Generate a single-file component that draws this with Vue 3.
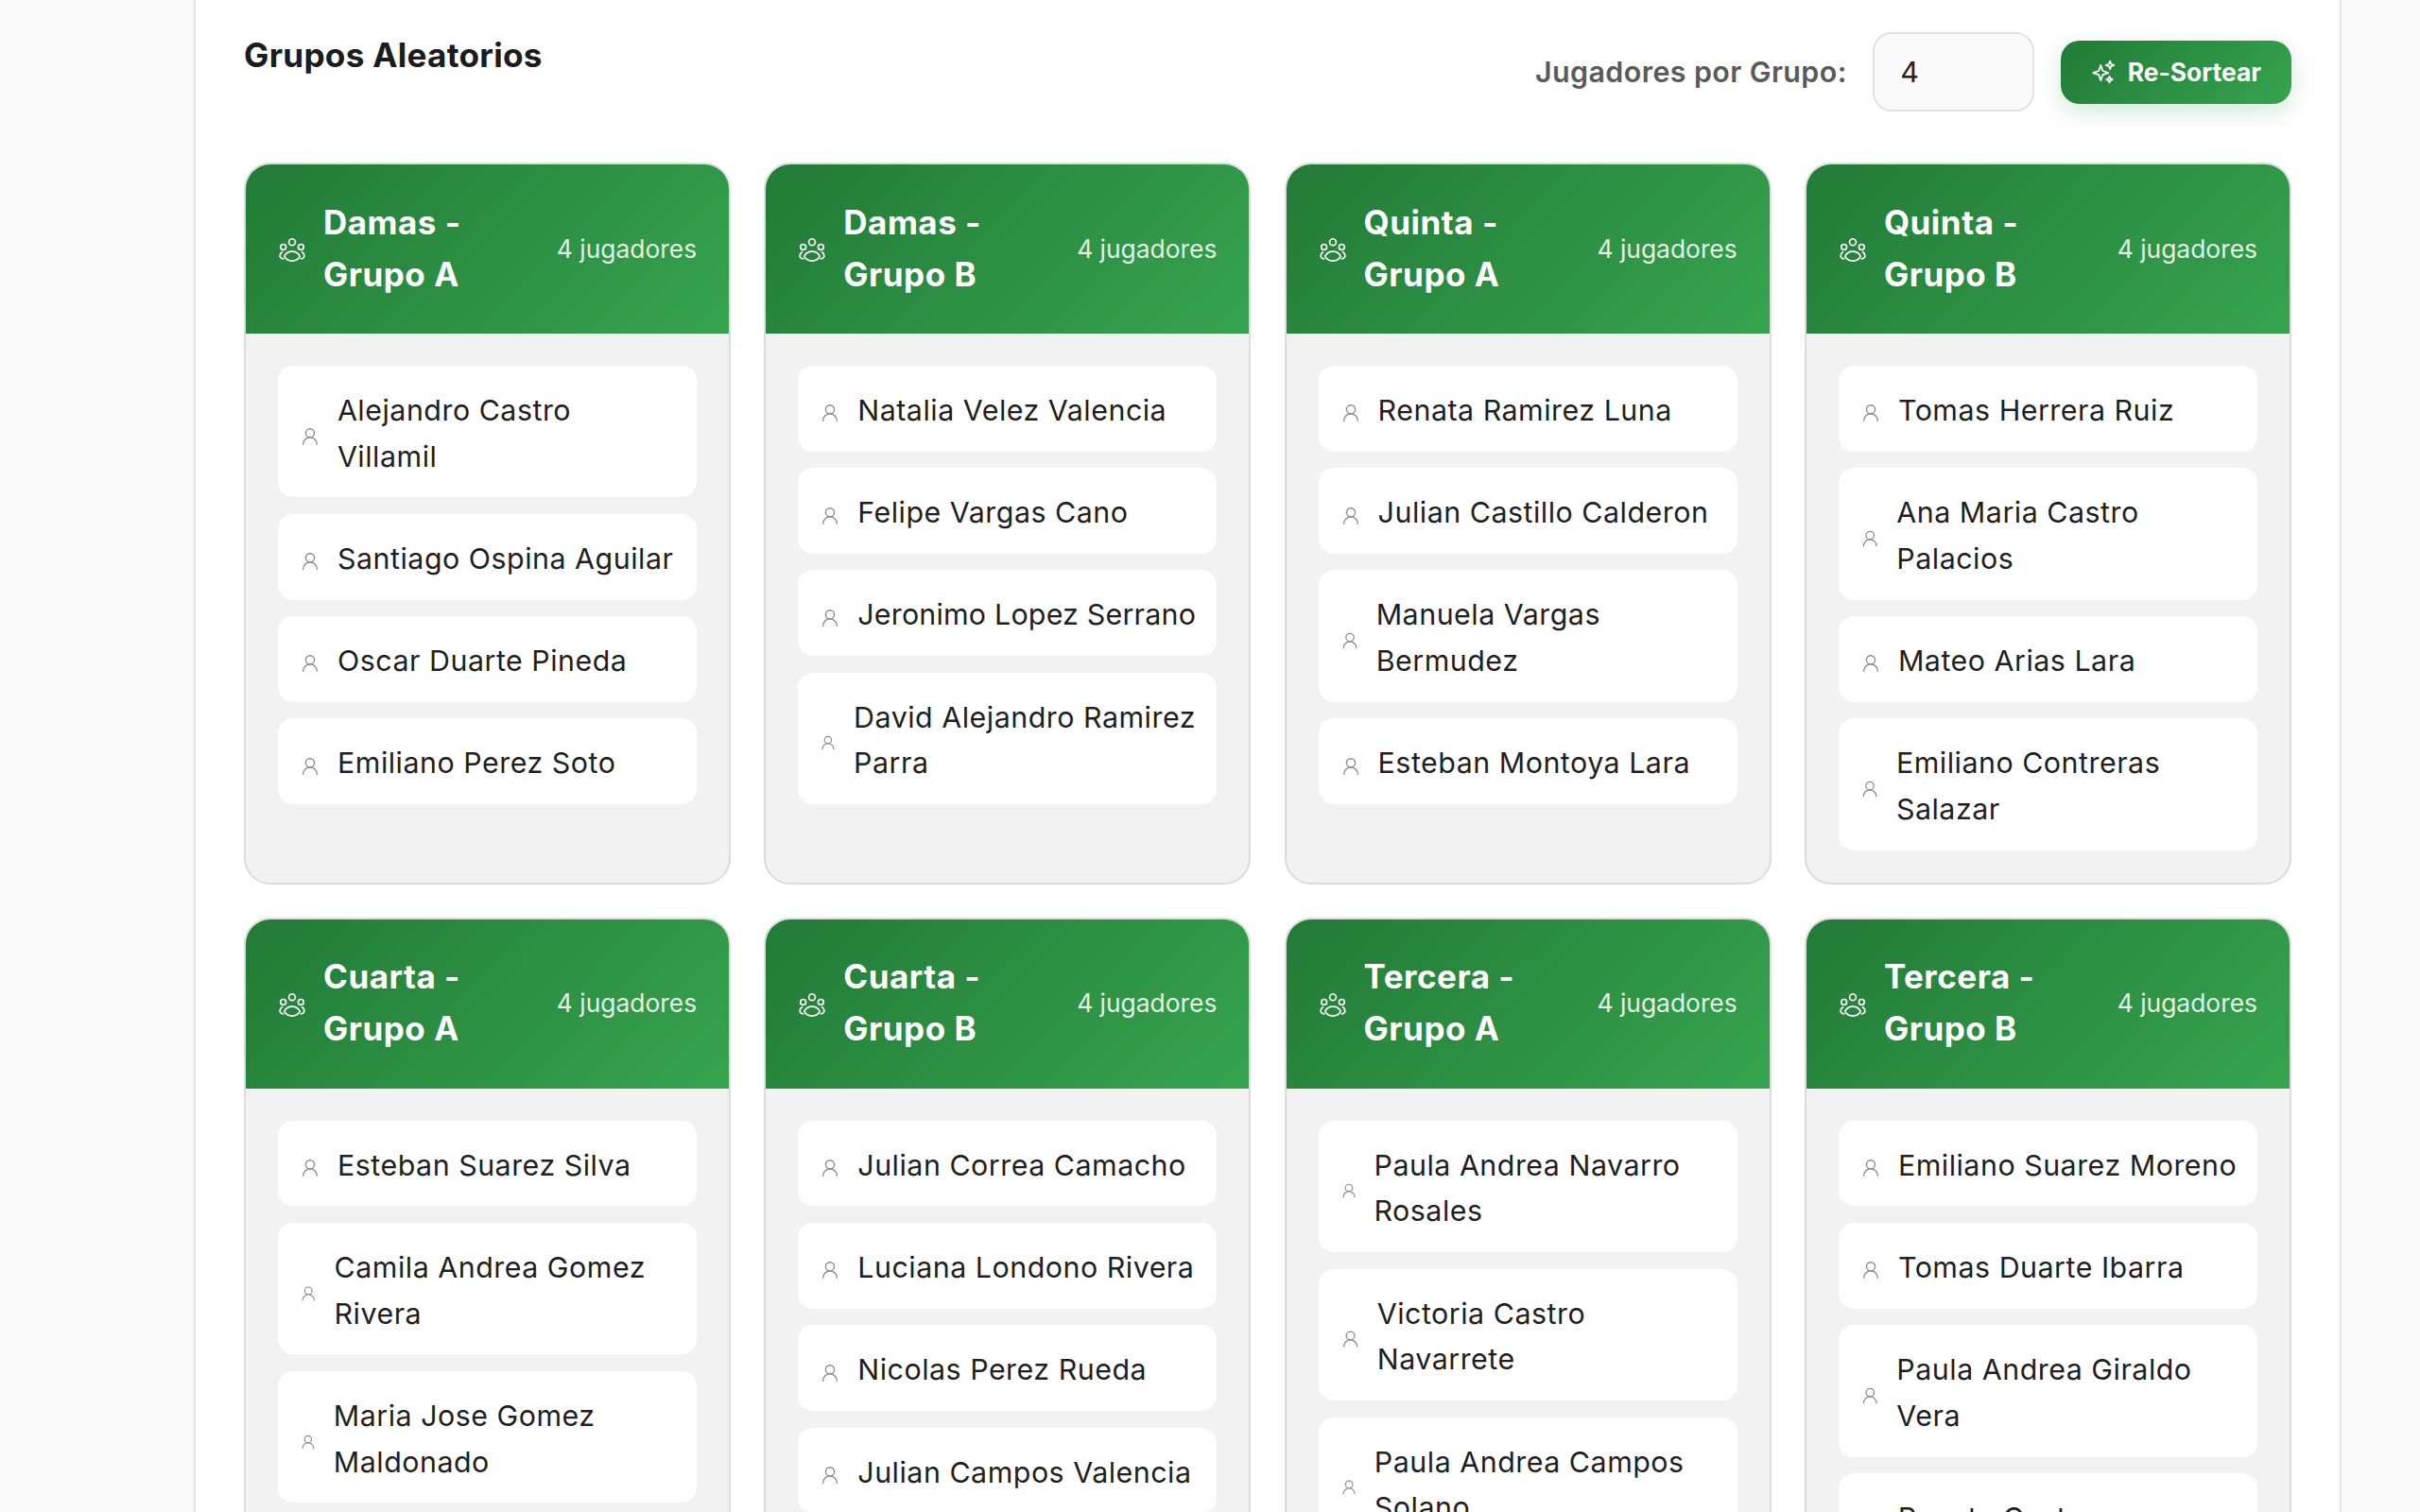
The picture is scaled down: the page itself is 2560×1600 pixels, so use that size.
<template>
  <div class="page">
    <section class="panel">
      <div class="panel-head">
        <h2 class="panel-title">Grupos Aleatorios</h2>
        <div class="controls">
          <label class="controls-label" for="per-group">Jugadores por Grupo:</label>
          <input id="per-group" class="controls-input" type="number" value="4">
          <button class="btn-sort" type="button">
            <svg class="btn-icon" viewBox="0 0 24 24" fill="none" stroke="currentColor" stroke-width="1.6" stroke-linejoin="round">
              <path d="M9.5 5.5 11.4 11.1 17 13 11.4 14.9 9.5 20.5 7.6 14.9 2 13 7.6 11.1Z" />
              <path d="M18.5 1.5 19.6 4.4 22.5 5.5 19.6 6.6 18.5 9.500 17.400 6.6 14.500 5.5 17.400 4.4Z" />
              <path d="M18 16.500 18.900 18.600 21 19.500 18.900 20.400 18 22.500 17.100 20.400 15 19.500 17.100 18.600Z" />
            </svg>
            Re-Sortear
          </button>
        </div>
      </div>

      <div class="groups">
        <article v-for="g in groups" :key="g.name" class="group">
          <header class="group-head">
            <div class="group-name">
              <svg class="group-icon" viewBox="0 0 27 24" fill="none" stroke="currentColor" stroke-width="1.6" stroke-linecap="round">
                <circle cx="13.500" cy="4" r="3.300" />
                <circle cx="4.500" cy="9" r="2.800" />
                <circle cx="22.500" cy="9" r="2.800" />
                <path d="M5.500 18.500C7 15 10 13.500 13.500 13.500S20 15 21.500 18.500C20 21.500 17 23.200 13.500 23.200S7 21.500 5.500 18.500Z" />
                <path d="M3.500 14C2 14.800 1.200 16.500 1 18.500 1.500 20 2.700 20.800 4.500 21" />
                <path d="M23.500 14C25 14.800 25.800 16.500 26 18.500 25.500 20 24.300 20.800 22.500 21" />
              </svg>
              <h3 class="group-title">{{ g.name }}</h3>
            </div>
            <span class="group-count">4 jugadores</span>
          </header>
          <ul class="players">
            <li v-for="p in g.players" :key="p" class="player" :class="{ tight: p === 'Jeronimo Lopez Serrano' }">
              <svg class="player-icon" viewBox="0 0 24 24" fill="none" stroke="currentColor" stroke-width="1.500" stroke-linecap="round">
                <circle cx="12" cy="8" r="5" />
                <path d="M20 21a8 8 0 0 0-16 0" />
              </svg>
              <span>{{ p }}</span>
            </li>
          </ul>
        </article>
      </div>
    </section>
  </div>
</template>

<script setup>
const groups = [
  { name: 'Damas - Grupo A', players: ['Alejandro Castro Villamil', 'Santiago Ospina Aguilar', 'Oscar Duarte Pineda', 'Emiliano Perez Soto'] },
  { name: 'Damas - Grupo B', players: ['Natalia Velez Valencia', 'Felipe Vargas Cano', 'Jeronimo Lopez Serrano', 'David Alejandro Ramirez Parra'] },
  { name: 'Quinta - Grupo A', players: ['Renata Ramirez Luna', 'Julian Castillo Calderon', 'Manuela Vargas Bermudez', 'Esteban Montoya Lara'] },
  { name: 'Quinta - Grupo B', players: ['Tomas Herrera Ruiz', 'Ana Maria Castro Palacios', 'Mateo Arias Lara', 'Emiliano Contreras Salazar'] },
  { name: 'Cuarta - Grupo A', players: ['Esteban Suarez Silva', 'Camila Andrea Gomez Rivera', 'Maria Jose Gomez Maldonado', 'Ricardo Pineda Soto'] },
  { name: 'Cuarta - Grupo B', players: ['Julian Correa Camacho', 'Luciana Londono Rivera', 'Nicolas Perez Rueda', 'Julian Campos Valencia'] },
  { name: 'Tercera - Grupo A', players: ['Paula Andrea Navarro Rosales', 'Victoria Castro Navarrete', 'Paula Andrea Campos Solano', 'Mateo Silva Vera'] },
  { name: 'Tercera - Grupo B', players: ['Emiliano Suarez Moreno', 'Tomas Duarte Ibarra', 'Paula Andrea Giraldo Vera', 'Renata Castro Villamizar'] }
]
</script>

<style>
html, body {
  margin: 0;
  background: #fafafa;
}
</style>

<style scoped>
.page {
  height: 100vh;
  overflow: hidden;
  padding: 0 83px 0 205px;
  background: #fafafa;
  font-family: Inter, "Liberation Sans", sans-serif;
  color: #1f1f1f;
  box-sizing: border-box;
}

.panel {
  background: #fff;
  border: solid #e4e4e4;
  border-width: 0 2px;
  padding: 34px 51px 60px;
}

.panel-head {
  display: flex;
  justify-content: space-between;
  align-items: flex-start;
  margin-bottom: 54px;
}

.panel-title {
  margin: 0;
  font-size: 35.2px;
  line-height: 48px;
  letter-spacing: 0.25px;
  font-weight: 700;
  color: #1c1c1c;
}

.controls {
  display: flex;
  align-items: center;
  gap: 27.5px;
}

.controls-label {
  font-size: 30.4px;
  letter-spacing: 0.4px;
  font-weight: 600;
  color: #5a5a5a;
}

.controls-input {
  width: 171px;
  height: 84px;
  box-sizing: border-box;
  padding: 0 27px;
  border: 2px solid #e2e2e2;
  border-radius: 20px;
  background: #f9f9f9;
  font-family: inherit;
  font-size: 30.4px;
  color: #222;
}

.btn-sort {
  display: flex;
  align-items: center;
  gap: 13px;
  height: 67px;
  padding: 0 32px;
  border: 0;
  border-radius: 20px;
  background: linear-gradient(135deg, #227a36, #36a44f);
  box-shadow: 0 8px 24px rgba(46, 160, 67, 0.22);
  color: #fff;
  font-family: inherit;
  font-size: 26.4px;
  font-weight: 700;
}

.btn-icon {
  width: 26px;
  height: 26px;
}

.groups {
  display: grid;
  grid-template-columns: repeat(4, 1fr);
  gap: 35.2px;
}

.group {
  border: 2px solid #dcdcdc;
  border-radius: 28px;
  background: #f2f2f2;
  overflow: hidden;
}

.group-head {
  display: flex;
  justify-content: space-between;
  align-items: center;
  gap: 16px;
  height: 181px;
  margin: -2px -2px 0;
  padding: 0 36px 0 37px;
  background: linear-gradient(135deg, #227a36, #36a44f);
  color: #fff;
}

.group-name {
  display: flex;
  align-items: center;
  gap: 19px;
}

.group-icon {
  width: 28px;
  height: 25px;
  margin-top: 4px;
  flex-shrink: 0;
}

.group-title {
  margin: 0;
  font-size: 35px;
  line-height: 55px;
  letter-spacing: 0.5px;
  font-weight: 700;
}

.group-count {
  font-size: 26.4px;
  white-space: nowrap;
  color: rgba(255, 255, 255, 0.88);
}

.players {
  list-style: none;
  margin: 0;
  padding: 34px;
  display: flex;
  flex-direction: column;
  gap: 17.6px;
}

.player {
  display: flex;
  align-items: center;
  gap: 18px;
  padding: 23px 20px 19px 23px;
  border-radius: 16px;
  background: #fff;
  font-size: 30.4px;
  line-height: 48.64px;
  letter-spacing: 0.5px;
  color: #1f1f1f;
}

.player.tight {
  letter-spacing: 0.2px;
}

.player-icon {
  width: 22px;
  height: 22px;
  margin-top: 6px;
  color: #8a8a8a;
}
</style>
